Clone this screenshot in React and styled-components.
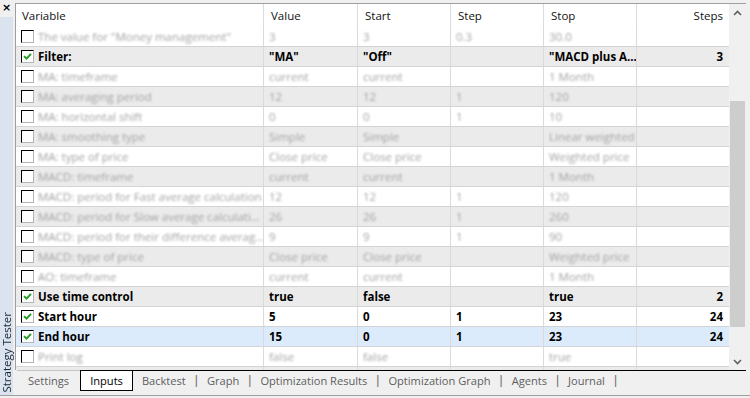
import React from "react";
import styled, { createGlobalStyle } from "styled-components";

const Global = createGlobalStyle`
  html, body { margin: 0; padding: 0; background: #f0f0f0; }
  body { font-family: "Open Sans", "Noto Sans", sans-serif; }
  * { box-sizing: border-box; }
`;

const Page = styled.div`
  width: 750px;
  height: 398px;
  background: #f0f0f0;
  overflow: hidden;
`;

const Frame = styled.div`
  display: flex;
  height: 396px;
  border-bottom: 1px solid #a0a0a0;
`;

const Side = styled.div`
  width: 15px;
  display: flex;
  flex-direction: column;
  flex-shrink: 0;
`;

const Close = styled.div`
  height: 17px;
  display: flex;
  justify-content: center;
  align-items: flex-start;
  padding-right: 2px;
  font-family: "DejaVu Sans", sans-serif;
  font-weight: 700;
  font-size: 11px;
  line-height: 15px;
  color: #000;
`;

const Strip = styled.div`
  flex: 1;
  width: 13px;
  background: #dae3ee;
  display: flex;
  flex-direction: column;
  justify-content: flex-end;
  align-items: center;
  padding-bottom: 2px;
`;

const StripLabel = styled.span`
  writing-mode: vertical-rl;
  transform: rotate(180deg);
  font-size: 11.5px;
  line-height: 13px;
  color: #1b2737;
  white-space: nowrap;
`;

const Main = styled.div`
  flex: 1;
  display: flex;
  flex-direction: column;
  padding-top: 3px;
  min-width: 0;
`;

const GridArea = styled.div`
  display: flex;
  height: 367px;
  border-top: 1px solid #a0a0a0;
  margin-right: 4px;
`;

const Table = styled.div`
  width: 714px;
  border-left: 1px solid #a0a0a0;
  background: #fff;
  overflow: hidden;
  font-size: 11.5px;
`;

const COLS = "247px 94px 93px 93px 93px 93px";

const HeaderRow = styled.div`
  display: grid;
  grid-template-columns: ${COLS};
  height: 23px;
  background: #fff;
  color: #111;
`;

const HeadCell = styled.div`
  padding: 0 ${(p) => (p.$right ? "6px" : "0")} 0 ${(p) => (p.$first ? "6px" : "7px")};
  border-left: ${(p) => (p.$first ? "none" : "1px solid #dcdcdc")};
  line-height: 23px;
  text-align: ${(p) => (p.$right ? "right" : "left")};
  white-space: nowrap;
  overflow: hidden;
`;

const tones = { white: "#ffffff", gray: "#ebebeb", sel: "#dcebfb" };

const Row = styled.div`
  display: grid;
  grid-template-columns: ${COLS};
  height: 20px;
  border-bottom: 1px solid #d4d4d4;
  background: ${(p) => tones[p.$tone]};
`;

const Cell = styled.div`
  display: flex;
  align-items: center;
  justify-content: ${(p) => (p.$right ? "flex-end" : "flex-start")};
  padding: 0 ${(p) => (p.$right ? "6px" : "0")} 0 5px;
  gap: 4px;
  border-left: ${(p) => (p.$first ? "none" : "1px solid #dadada")};
  white-space: nowrap;
  overflow: hidden;
  line-height: 19px;
`;

const Txt = styled.span`
  color: ${(p) => (p.$dim ? "#a2a2a2" : "#000")};
  font-weight: ${(p) => (p.$dim ? 400 : 700)};
  filter: ${(p) => (p.$dim ? "blur(0.9px)" : "none")};
`;

const Box = styled.span`
  width: 13px;
  height: 13px;
  flex-shrink: 0;
  background: #fff;
  border-top: 1px solid #000;
  border-left: 1px solid #000;
  border-right: 1px solid #b4b4b4;
  border-bottom: 1px solid #b4b4b4;
  display: flex;
  align-items: center;
  justify-content: center;
`;

const Scroll = styled.div`
  width: 17px;
  background: #f0f0f0;
  display: flex;
  flex-direction: column;
  align-items: center;
`;

const Arrow = styled.div`
  height: 17px;
  width: 17px;
  display: flex;
  align-items: center;
  justify-content: center;
`;

const Track = styled.div`
  flex: 1;
  width: 15px;
  display: flex;
  flex-direction: column;
  padding: 80px 0 26px;
`;

const Thumb = styled.div`
  flex: 1;
  background: #cdcdcd;
`;

const TabBar = styled.div`
  display: flex;
  align-items: flex-start;
  height: 26px;
  padding-left: 2px;
  margin-right: 4px;
  font-size: 11.1px;
`;

const Tab = styled.div`
  height: 21px;
  padding: 0 ${(p) => (p.$active ? "9px" : p.$lead ? "11px" : "9px")};
  line-height: 19px;
  white-space: nowrap;
  color: ${(p) => (p.$active ? "#000" : "#5e5e5e")};
  background: ${(p) => (p.$active ? "#fff" : "transparent")};
  border-top: 1px solid ${(p) => (p.$lead ? "#c4c4c4" : "#000")};
  border-left: ${(p) => (p.$active ? "1px solid #000" : "none")};
  border-right: ${(p) => (p.$active ? "1px solid #000" : "none")};
  border-bottom: ${(p) => (p.$active ? "1px solid #000" : "none")};
`;

const Sep = styled.div`
  height: 21px;
  border-top: 1px solid #000;
  line-height: 19px;
  font-family: "Liberation Sans", sans-serif;
  font-size: 12px;
  color: #6a6a6a;
`;

const Filler = styled.div`
  flex: 1;
  height: 21px;
  border-top: 1px solid #000;
`;

const Check = () => (
  <svg width="9" height="9" viewBox="0 0 9 9">
    <path d="M1 4.2 L3.5 6.7 L8 1.8" fill="none" stroke="#1f9e1f" strokeWidth="1.9" />
  </svg>
);

const Chevron = ({ up }) => (
  <svg width="9" height="6" viewBox="0 0 9 6">
    <path
      d={up ? "M1 5 L4.5 1.5 L8 5" : "M1 1 L4.5 4.5 L8 1"}
      fill="none"
      stroke="#606060"
      strokeWidth="1.6"
    />
  </svg>
);

const rows = [
  ["The value for \"Money management\"", "3", "3", "0.3", "30.0", "", false],
  ["Filter:", "\"MA\"", "\"Off\"", "", "\"MACD plus A...", "3", true],
  ["MA: timeframe", "current", "current", "", "1 Month", "", false],
  ["MA: averaging period", "12", "12", "1", "120", "", false],
  ["MA: horizontal shift", "0", "0", "1", "10", "", false],
  ["MA: smoothing type", "Simple", "Simple", "", "Linear weighted", "", false],
  ["MA: type of price", "Close price", "Close price", "", "Weighted price", "", false],
  ["MACD: timeframe", "current", "current", "", "1 Month", "", false],
  ["MACD: period for Fast average calculation", "12", "12", "1", "120", "", false],
  ["MACD: period for Slow average calculati...", "26", "26", "1", "260", "", false],
  ["MACD: period for their difference averag...", "9", "9", "1", "90", "", false],
  ["MACD: type of price", "Close price", "Close price", "", "Weighted price", "", false],
  ["AO: timeframe", "current", "current", "", "1 Month", "", false],
  ["Use time control", "true", "false", "", "true", "2", true],
  ["Start hour", "5", "0", "1", "23", "24", true],
  ["End hour", "15", "0", "1", "23", "24", true],
  ["Print log", "false", "false", "", "true", "", false],
  ["Magic number", "12345", "12345", "1", "123450", "", false],
];

const tabs = ["Backtest", "Graph", "Optimization Results", "Optimization Graph", "Agents", "Journal"];

export default function App() {
  return (
    <Page>
      <Global />
      <Frame>
        <Side>
          <Close>×</Close>
          <Strip>
            <StripLabel>Strategy Tester</StripLabel>
          </Strip>
        </Side>
        <Main>
          <GridArea>
            <Table>
              <HeaderRow>
                <HeadCell $first>Variable</HeadCell>
                <HeadCell>Value</HeadCell>
                <HeadCell>Start</HeadCell>
                <HeadCell>Step</HeadCell>
                <HeadCell>Stop</HeadCell>
                <HeadCell $right>Steps</HeadCell>
              </HeaderRow>
              {rows.map((r, i) => {
                const on = r[6];
                const tone = i === 15 ? "sel" : i % 2 === 1 ? "gray" : "white";
                return (
                  <Row key={i} $tone={tone}>
                    <Cell $first>
                      <Box>{on && <Check />}</Box>
                      <Txt $dim={!on}>{r[0]}</Txt>
                    </Cell>
                    {r.slice(1, 5).map((v, j) => (
                      <Cell key={j}>
                        <Txt $dim={!on}>{v}</Txt>
                      </Cell>
                    ))}
                    <Cell $right>
                      <Txt $dim={!on}>{r[5]}</Txt>
                    </Cell>
                  </Row>
                );
              })}
            </Table>
            <Scroll>
              <Arrow>
                <Chevron up />
              </Arrow>
              <Track>
                <Thumb />
              </Track>
              <Arrow>
                <Chevron />
              </Arrow>
            </Scroll>
          </GridArea>
          <TabBar>
            <Tab $lead>Settings</Tab>
            <Tab $active>Inputs</Tab>
            {tabs.map((t) => (
              <React.Fragment key={t}>
                <Tab>{t}</Tab>
                <Sep>|</Sep>
              </React.Fragment>
            ))}
            <Filler />
          </TabBar>
        </Main>
      </Frame>
    </Page>
  );
}
